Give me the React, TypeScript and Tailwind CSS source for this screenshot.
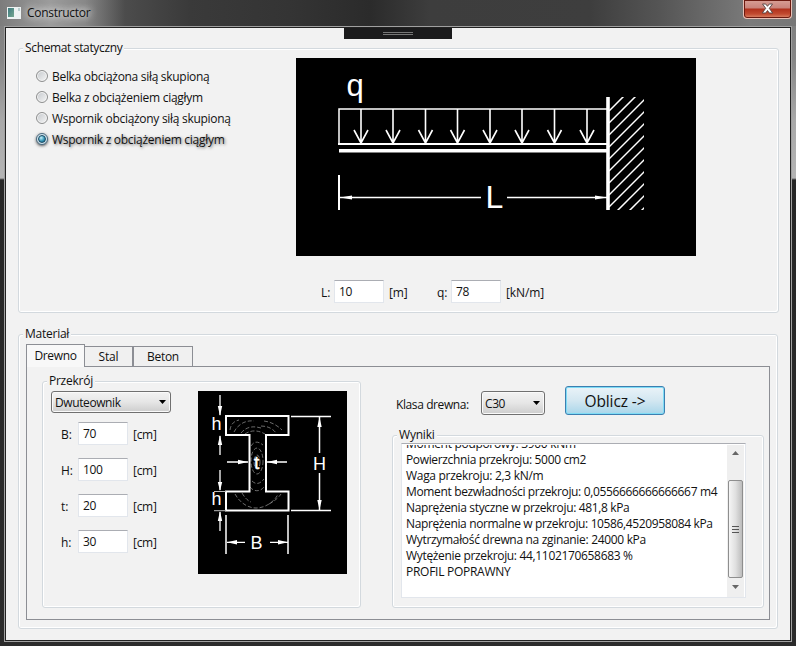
import React from "react";

const HATCH_START = [52, 64, 76, 88, 100, 112, 124, 136, 148, 160, 172, 184];
const LOAD_X = [65, 97, 129.5, 161.5, 194, 226, 258.5, 291];

function Group({ title, className, legendClass = "", children }: { title: string; className: string; legendClass?: string; children?: React.ReactNode }) {
  return (
    <fieldset className={`min-w-0 rounded-[3px] border border-[#d3d9de] shadow-[inset_1px_1px_0_#fff,inset_-1px_-1px_0_#fff] ${className}`}>
      <legend className={`relative ml-[4px] h-[16px] bg-[#f2f2f2] px-[2px] leading-[16px] whitespace-nowrap ${legendClass}`}>{title}</legend>
      {children}
    </fieldset>
  );
}

function Radio({ label, checked = false, tracking }: { label: string; checked?: boolean; tracking: string }) {
  return (
    <label className="flex h-[21px] items-center gap-[4px]">
      <span className={`mb-[2px] flex h-[12px] w-[12px] items-center justify-center rounded-full border ${checked ? "border-[#4b6a80] bg-[#d5e8f0] shadow-[0_1px_3px_#555]" : "border-[#8e8f8f] bg-gradient-to-br from-[#c4c8cc] to-[#f6f6f6] shadow-[inset_0_0_0_1px_#f4f4f4]"}`}>
        {checked && <span className="h-[8px] w-[8px] rounded-full border border-[#1c4a63] bg-[radial-gradient(circle_at_35%_30%,#c5f0fb,#2d8fb0_60%,#135674)]" />}
      </span>
      <span className={`whitespace-nowrap ${tracking} ${checked ? "[text-shadow:1px_1px_3px_rgba(0,0,0,0.6)]" : ""}`}>{label}</span>
    </label>
  );
}

function Input({ value }: { value: string }) {
  return (
    <div className="h-[23px] w-[50px] shrink-0 border border-[#e2e6ec] border-t-[#abadb3] bg-white pl-[4px] text-[12px] leading-[22px] tracking-[-0.3px]">{value}</div>
  );
}

function Combo({ value, className, tracking }: { value: string; className: string; tracking: string }) {
  return (
    <div className={`flex items-center justify-between rounded-[3px] border border-[#707070] bg-gradient-to-b from-[#f3f3f3] via-[#e6e6e6] via-50% to-[#cdcdcd] pr-[4px] pl-[3px] shadow-[inset_0_0_0_1px_#fafafa] ${className}`}>
      <span className={`pt-[2px] ${tracking}`}>{value}</span>
      <svg width="7" height="4" viewBox="0 0 7 4"><path d="M0 0H7L3.5 4Z" fill="#000" /></svg>
    </div>
  );
}

function BeamDrawing() {
  return (
    <svg width="400" height="198" viewBox="0 0 400 198" className="block bg-black" stroke="#fff" fill="none">
      <defs><clipPath id="wall"><rect x="313" y="39" width="35" height="113" /></clipPath></defs>
      <text x="50.5" y="38" fontSize="31" fill="#fff" stroke="none" fontFamily="Liberation Sans, sans-serif">q</text>
      <path d="M43 87V51H312" strokeWidth="1.5" />
      <path d="M42 86H312" strokeWidth="2" />
      <path d="M43 92.8H312" strokeWidth="3.6" />
      {LOAD_X.map((x) => (
        <path key={x} d={`M${x} 51V85M${x - 7} 72L${x} 85L${x + 7} 72`} strokeWidth="1.6" />
      ))}
      <path d="M43 117V152" strokeWidth="2" />
      <path d="M44 139.5H185M211 139.5H312" strokeWidth="1.5" />
      <path d="M44 139.5L56 137.5V141.5ZM311 139.5L299 137.5V141.5Z" fill="#fff" stroke="none" />
      <text x="189.5" y="150" fontSize="32" fill="#fff" stroke="none" fontFamily="Liberation Sans, sans-serif">L</text>
      <path d="M312 39V152" strokeWidth="3.6" />
      <g clipPath="url(#wall)" strokeWidth="1.5">
        {HATCH_START.map((y) => (
          <path key={y} d={`M313 ${y + 1}L349 ${y - 35}`} />
        ))}
      </g>
    </svg>
  );
}

function SectionDrawing() {
  return (
    <svg width="149" height="183" viewBox="0 0 149 183" className="block bg-black" stroke="#fff" fill="none">
      <g stroke="#999" strokeWidth="0.7" strokeDasharray="4 2">
        <path d="M32 39C33 32 37 30 41 29M36 41C40 33 48 29 56 30M43 42C49 35 56 35 63 37M47 43C54 38 62 40 67 43M66 30C74 31 80 35 84 39M63 35C71 35 76 39 78 42" />
        <path d="M37 103C42 112 50 117 58 117C68 117 77 110 80 103M44 102C47 107 50 110 53 111M71 113C77 110 81 106 83 103M52 96C56 101 62 101 66 96" />
        <ellipse cx="59" cy="70" rx="6" ry="13" />
        <ellipse cx="59" cy="71" rx="3" ry="7" />
        <path d="M53 55C56 50 60 50 65 54M54 90C58 94 62 93 66 88" />
      </g>
      <path d="M28 25H90.5V44H68V100.5H90.5V119.5H28V100.5H51.5V44H28Z" strokeWidth="2" />
      <path d="M93 25.5H133M93 119.5H133M121.5 26V62M121.5 82V119M28 124V163M90 124V163" strokeWidth="1.5" />
      <path d="M22 4V24M22 45V64M22 79V99M22 121V140M29 71H50M69 71H89M29 151.3H47M72 151.3H90" strokeWidth="1.3" />
      <path d="M16 100.5H28M16 119.7H28" strokeWidth="1" stroke="#bbb" />
      <path
        d="M22 25L19.8 15H24.2ZM22 44L19.8 54H24.2ZM22 100L19.8 91H24.2ZM22 120L19.8 130H24.2ZM121.5 26L119.3 36H123.7ZM121.5 119L119.3 109H123.7ZM50 71L40 68.8V73.2ZM69 71L79 68.8V73.2ZM29 151.3L39 149.1V153.5ZM90 151.3L80 149.1V153.5Z"
        fill="#fff"
        stroke="none"
      />
      <g fill="#fff" stroke="none" fontSize="18" fontFamily="Liberation Sans, sans-serif">
        <text x="13.5" y="39">h</text>
        <text x="13.5" y="114">h</text>
        <text x="56" y="77.5" fontSize="19" stroke="#fff" strokeWidth="0.5">t</text>
        <text x="115" y="78.5">H</text>
        <text x="52.5" y="157.5">B</text>
      </g>
    </svg>
  );
}

const DIMENSIONS = [
  { name: "B:", value: "70" },
  { name: "H:", value: "100" },
  { name: "t:", value: "20" },
  { name: "h:", value: "30" },
];

const RESULTS = [
  { text: "Moment podporowy: 3900 kNm", tracking: "tracking-[-0.31px]" },
  { text: "Powierzchnia przekroju: 5000 cm2", tracking: "tracking-[-0.35px]" },
  { text: "Waga przekroju: 2,3 kN/m", tracking: "tracking-[-0.3px]" },
  { text: "Moment bezwładności przekroju: 0,0556666666666667 m4", tracking: "tracking-[-0.35px]" },
  { text: "Naprężenia styczne w przekroju: 481,8 kPa", tracking: "tracking-[-0.35px]" },
  { text: "Naprężenia normalne w przekroju: 10586,4520958084 kPa", tracking: "tracking-[-0.37px]" },
  { text: "Wytrzymałość drewna na zginanie: 24000 kPa", tracking: "tracking-[-0.32px]" },
  { text: "Wytężenie przekroju: 44,1102170658683 %", tracking: "tracking-[-0.33px]" },
  { text: "PROFIL POPRAWNY", tracking: "tracking-[-0.27px]" },
];

function TitleBar() {
  return (
    <div className="flex h-[26px] items-start justify-between bg-[linear-gradient(90deg,#7c7c7c_0px,#9c9c9c_50px,#888_85px,#4c4c4c_125px,#3a3a3a_190px,#343434_290px,#2b2b2b_370px,#3d3d3d_430px,#3e3e3e_590px,#555_660px,#7b7b7b_750px,#777_100%)]">
      <div className="flex items-center pt-[5px] pl-[7px]">
        <span className="flex h-[12px] w-[14px] border border-[#eef3f3] bg-[#eef3f3]">
          <span className="h-[9px] w-[6px] bg-gradient-to-br from-[#3d7a80] to-[#76a890]" />
          <span className="ml-[4px] h-[3px] w-[2px] bg-[#b9cfd0]" />
        </span>
        <span className="ml-[6px] leading-[16px] tracking-[-0.3px] [text-shadow:0_0_7px_#fff,0_0_8px_#ddd]">Constructor</span>
      </div>
      <div className="mr-[4px] flex h-[19px] w-[49px] items-center justify-center rounded-b-[4px] border border-t-0 border-[#e8c0b6] bg-[linear-gradient(180deg,#d9a096_0px,#c9837a_8px,#b0311c_9px,#c24a30_14px,#dc8a6c_18px)] pb-[2px] shadow-[inset_0_0_0_1px_#6b1a10]">
        <svg width="13" height="11" viewBox="0 0 13 11"><path d="M1.5 1H4.7L6.5 3.3L8.3 1H11.5L8.3 5.3L11.7 10H8.3L6.5 7.5L4.7 10H1.3L4.7 5.3Z" fill="#fff" stroke="#53413f" strokeWidth="0.9" /></svg>
      </div>
    </div>
  );
}

export default function App() {
  return (
    <div className="h-[646px] w-[796px] overflow-hidden bg-[linear-gradient(180deg,#7c7c7c_0px,#868686_60px,#a8a8a8_120px,#b4b4b4_178px,#262626_180px,#2b2b2b_100%)] font-['Open_Sans','Noto_Sans',sans-serif] text-[12px] text-[#111]">
      <TitleBar />
      <div className="ml-[4px] h-[616px] w-[788px] border border-[#a0a0a0]">
        <div className="h-[614px] w-[786px] border border-[#222] bg-[#f2f2f2]">
          <div className="ml-[338px] flex h-[11px] w-[108px] items-center justify-center bg-[#1b1b1c]">
            <span className="h-[3px] w-[30px] border-y border-[#777]" />
          </div>
          <Group title="Schemat statyczny" className="mt-px ml-[12px] h-[273px] w-[761px]" legendClass="tracking-[-0.35px]">
            <div className="flex">
              <div className="w-[277px] pt-[10px] pl-[17px]">
                <Radio label="Belka obciążona siłą skupioną" tracking="tracking-[-0.3px]" />
                <Radio label="Belka z obciążeniem ciągłym" tracking="tracking-[-0.27px]" />
                <Radio label="Wspornik obciążony siłą skupioną" tracking="tracking-[-0.29px]" />
                <Radio label="Wspornik z obciążeniem ciągłym" tracking="tracking-[-0.27px]" checked />
              </div>
              <div className="mt-[2px]"><BeamDrawing /></div>
            </div>
            <div className="mt-[24px] flex pl-[302px] leading-[26px]">
              <span className="w-[13px]">L:</span>
              <Input value="10" />
              <span className="ml-[5px] w-[48px] tracking-[-0.1px]">[m]</span>
              <span className="w-[14px]">q:</span>
              <Input value="78" />
              <span className="ml-[5px] tracking-[-0.1px]">[kN/m]</span>
            </div>
          </Group>
          <Group title="Materiał" className="mt-[13px] ml-[12px] h-[303px] w-[760px]" legendClass="tracking-[-0.25px]">
            <div className="flex h-[25px] items-end pt-[2px] pl-[7px]">
              <div className="relative z-10 h-[23px] w-[59px] border border-b-0 border-[#8c8e94] bg-[#f8f8f8] text-center leading-[22px] tracking-[-0.35px]">Drewno</div>
              <div className="-ml-px h-[21px] w-[49px] border border-[#8c8e94] bg-[#f0f0f0] text-center leading-[20px] tracking-[-0.2px]">Stal</div>
              <div className="h-[21px] w-[60px] border border-[#8c8e94] bg-[#f0f0f0] text-center leading-[20px] tracking-[-0.3px]">Beton</div>
            </div>
            <div className="-mt-px ml-[7px] flex h-[254px] w-[744px] border border-[#8c8e94] pt-[6px] pl-[15px]">
              <Group title="Przekrój" className="h-[235px] w-[319px]" legendClass="tracking-[-0.25px]">
                <div className="flex pt-[2px] pl-[8px]">
                  <div className="w-[147px]">
                    <Combo value="Dwuteownik" className="h-[22px] w-[120px]" tracking="tracking-[-0.4px]" />
                    <div className="mt-[9px] flex flex-col gap-[13px] pl-[10px]">
                      {DIMENSIONS.map((d) => (
                        <div key={d.name} className="flex h-[23px] leading-[26px]">
                          <span className="w-[17px]">{d.name}</span>
                          <Input value={d.value} />
                          <span className="ml-[5px] tracking-[-0.3px]">[cm]</span>
                        </div>
                      ))}
                    </div>
                  </div>
                  <SectionDrawing />
                </div>
              </Group>
              <div className="ml-[31px] pt-[13px]">
                <div className="flex h-[29px] items-start pl-[4px]">
                  <span className="w-[85px] pt-[10px] leading-[18px] tracking-[-0.4px] whitespace-nowrap">Klasa drewna:</span>
                  <Combo value="C30" className="mt-[5px] h-[24px] w-[64px]" tracking="tracking-[-0.4px]" />
                  <button className="ml-[20px] h-[29px] w-[100px] rounded-[3px] border border-[#3c7fb1] bg-gradient-to-b from-[#eaf3f8] via-[#d3e7f1] via-50% to-[#a9d6ea] text-[15.5px] leading-[29px] tracking-[-0.1px] shadow-[inset_0_0_0_1px_#7fdcf5]">Oblicz -&gt;</button>
                </div>
                <Group title="Wyniki" className="mt-[12px] h-[181px] w-[372px]" legendClass="tracking-[-0.2px]">
                  <div className="ml-[8px] flex h-[155px] w-[345px] border border-[#e2e6ec] border-t-[#abadb3] bg-white pt-px">
                    <div className="h-[151px] w-[325px] overflow-hidden pl-[4px]">
                      <div className="-mt-[9px]">
                        {RESULTS.map((r) => (
                          <div key={r.text} className="h-[16px] leading-[16px] whitespace-nowrap"><span className={r.tracking}>{r.text}</span></div>
                        ))}
                      </div>
                    </div>
                    <div className="flex h-[152px] w-[17px] flex-col items-center bg-[#efefef]">
                      <svg className="mt-[6px]" width="7" height="4" viewBox="0 0 7 4"><path d="M0 4H7L3.5 0Z" fill="#666" /></svg>
                      <div className="mt-[25px] flex h-[98px] w-[15px] flex-col items-center justify-center gap-[2px] rounded-[2px] border border-[#8e8e8e] bg-gradient-to-r from-[#f5f5f5] via-[#e0e0e0] to-[#bdbdbd]">
                        <span className="h-px w-[7px] bg-[#555]" />
                        <span className="h-px w-[7px] bg-[#555]" />
                        <span className="h-px w-[7px] bg-[#555]" />
                      </div>
                      <svg className="mt-[7px]" width="7" height="4" viewBox="0 0 7 4"><path d="M0 0H7L3.5 4Z" fill="#666" /></svg>
                    </div>
                  </div>
                </Group>
              </div>
            </div>
          </Group>
        </div>
      </div>
    </div>
  );
}
